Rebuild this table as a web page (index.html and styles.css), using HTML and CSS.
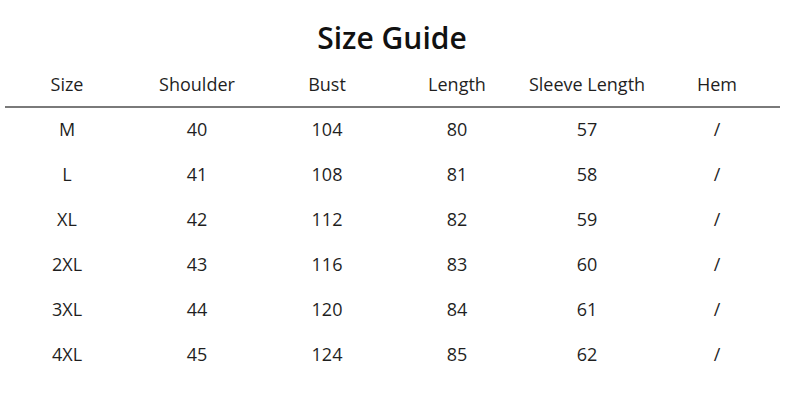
FILE: index.html
```html
<!DOCTYPE html>
<html lang="en">
<head>
<meta charset="utf-8">
<title>Size Guide</title>
<link rel="stylesheet" href="styles.css">
</head>
<body>
<main class="guide">
  <h1 class="title">Size Guide</h1>
  <div class="row head">
    <span>Size</span><span>Shoulder</span><span>Bust</span><span>Length</span><span>Sleeve Length</span><span>Hem</span>
  </div>
  <div class="rule"></div>
  <div class="row"><span>M</span><span>40</span><span>104</span><span>80</span><span>57</span><span>/</span></div>
  <div class="row"><span>L</span><span>41</span><span>108</span><span>81</span><span>58</span><span>/</span></div>
  <div class="row"><span>XL</span><span>42</span><span>112</span><span>82</span><span>59</span><span>/</span></div>
  <div class="row"><span>2XL</span><span>43</span><span>116</span><span>83</span><span>60</span><span>/</span></div>
  <div class="row"><span>3XL</span><span>44</span><span>120</span><span>84</span><span>61</span><span>/</span></div>
  <div class="row"><span>4XL</span><span>45</span><span>124</span><span>85</span><span>62</span><span>/</span></div>
</main>
</body>
</html>
```
FILE: styles.css
```css
html, body {
  margin: 0;
  padding: 0;
  background: #fff;
}
body {
  width: 785px;
  height: 400px;
  overflow: hidden;
  font-family: "Open Sans", "Noto Sans", sans-serif;
  color: #1f1f1f;
}
.guide {
  padding: 18px 3px 0 2px;
}
.title {
  margin: 0;
  font-size: 30px;
  line-height: 40px;
  font-weight: 600;
  text-align: center;
  color: #111;
}
.row {
  display: grid;
  grid-template-columns: repeat(6, 130px);
  height: 45px;
  line-height: 42px;
  font-size: 18px;
}
.row span {
  text-align: center;
}
.head {
  margin-top: 4px;
  height: 44px;
  line-height: 44px;
}
.rule {
  height: 2px;
  margin: 0 2px 0 3px;
  background: #7a7a7a;
}
```
